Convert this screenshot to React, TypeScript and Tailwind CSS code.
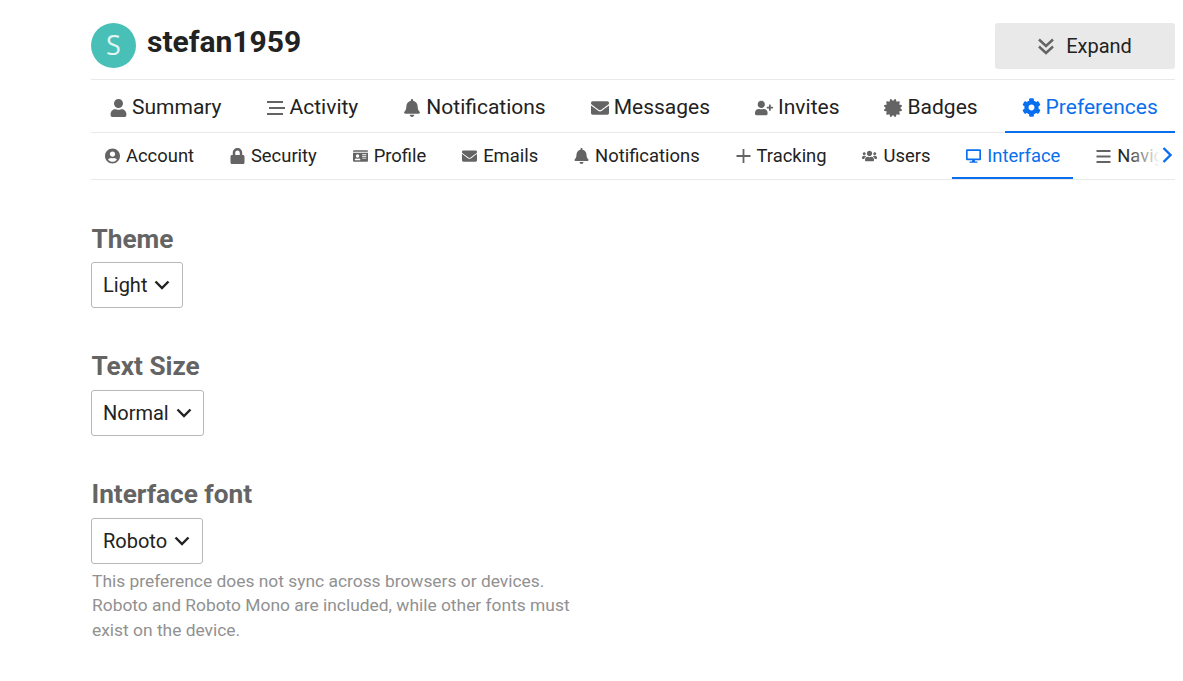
import React from 'react';
import type { IconType } from 'react-icons';
import {
  FaUser, FaBell, FaEnvelope, FaUserPlus, FaCertificate, FaCog,
  FaUserCircle, FaLock, FaIdCard, FaUsers, FaDesktop,
} from 'react-icons/fa';

type IconProps = { className?: string };

const StreamIcon = ({ className }: IconProps) => (
  <svg viewBox="0 0 18 14" fill="none" stroke="currentColor" strokeWidth="2" className={className}>
    <path d="M0 1h16M2 7h16M0 13h16" />
  </svg>
);

const BarsIcon = ({ className }: IconProps) => (
  <svg viewBox="0 0 14 13" fill="none" stroke="currentColor" strokeWidth="2" className={className}>
    <path d="M0 1h14M0 6.5h14M0 12h14" />
  </svg>
);

const PlusIcon = ({ className }: IconProps) => (
  <svg viewBox="0 0 14 14" fill="none" stroke="currentColor" strokeWidth="1.8" className={className}>
    <path d="M7 0v14M0 7h14" />
  </svg>
);

const mainNav: { label: string; icon: IconType | React.FC<IconProps>; size: string; active?: boolean }[] = [
  { label: 'Summary', icon: FaUser, size: 'h-[18px] w-[17px]' },
  { label: 'Activity', icon: StreamIcon, size: 'h-[14px] w-[18px]' },
  { label: 'Notifications', icon: FaBell, size: 'h-[18px] w-[18px]' },
  { label: 'Messages', icon: FaEnvelope, size: 'h-[18px] w-[18px]' },
  { label: 'Invites', icon: FaUserPlus, size: 'h-[18px] w-[18px]' },
  { label: 'Badges', icon: FaCertificate, size: 'h-[18px] w-[18px]' },
  { label: 'Preferences', icon: FaCog, size: 'h-[19px] w-[19px]', active: true },
];

const subNav: { label: string; icon: IconType | React.FC<IconProps>; size: string; active?: boolean }[] = [
  { label: 'Account', icon: FaUserCircle, size: 'h-[16px] w-[15px]' },
  { label: 'Security', icon: FaLock, size: 'h-[16px] w-[15px]' },
  { label: 'Profile', icon: FaIdCard, size: 'h-[16px] w-[15px]' },
  { label: 'Emails', icon: FaEnvelope, size: 'h-[16px] w-[15px]' },
  { label: 'Notifications', icon: FaBell, size: 'h-[16px] w-[15px]' },
  { label: 'Tracking', icon: PlusIcon, size: 'h-[14px] w-[15px]' },
  { label: 'Users', icon: FaUsers, size: 'h-[16px] w-[15px]' },
  { label: 'Interface', icon: FaDesktop, size: 'h-[16px] w-[15px]', active: true },
  { label: 'Navigation', icon: BarsIcon, size: 'h-[13px] w-[15px]' },
];

const Select: React.FC<{ value: string }> = ({ value }) => (
  <button className="flex h-[46px] items-center gap-[7px] rounded-[3px] border border-[#b8b8b8] bg-white pl-[11px] pr-[11.6px] text-[20px] text-[#222222]">
    {value}
    <svg viewBox="0 0 16 10" fill="none" stroke="currentColor" strokeWidth="2.4" className="h-[10px] w-[16px]">
      <path d="M1.5 1.5 8 8l6.5-6.5" />
    </svg>
  </button>
);

const App: React.FC = () => {
  return (
    <div className="min-h-[681px] overflow-hidden bg-white pl-[91px] pr-[8px] font-['Roboto',sans-serif] text-[#222222]">
      {/* user header */}
      <div className="flex h-[80px] items-start justify-between border-b border-[#e9e9e9] pt-[23px]">
        <div className="flex items-start gap-[11px]">
          <div className="flex h-[45px] w-[45px] items-center justify-center rounded-full bg-[#48c0b8] font-['Open_Sans',sans-serif] text-[27px] text-[#e4f5f3]">
            S
          </div>
          <h1 className="text-[30px] leading-[38px] font-bold">stefan1959</h1>
        </div>
        <button className="flex h-[46px] w-[180px] items-center justify-center gap-[12px] rounded-[3px] bg-[#e9e9e9] text-[20px]">
          <svg viewBox="0 0 16 17" fill="none" stroke="#646464" strokeWidth="2.4" className="h-[17px] w-[16px]">
            <path d="M1 1.5 8 8l7-6.5M1 8.5l7 6.5 7-6.5" />
          </svg>
          Expand
        </button>
      </div>

      {/* main tabs */}
      <nav className="flex h-[53px] items-stretch gap-[10px] border-b border-[#e9e9e9] pl-[2px]">
        {mainNav.map(({ label, icon: Icon, size, active }) => (
          <a
            key={label}
            className={`-mb-px flex items-center gap-[5px] border-b-2 pt-[4px] pr-[18px] pl-[17px] text-[21px] last:-ml-px last:pr-[17px] ${
              active ? 'border-[#0a6fef] text-[#0a6fef]' : 'border-transparent'
            }`}
          >
            <Icon className={`${size} ${active ? 'text-[#0a6fef]' : 'text-[#646464]'}`} />
            {label}
          </a>
        ))}
      </nav>

      {/* sub tabs, scrolls sideways */}
      <div className="relative border-b border-[#e9e9e9]">
        <nav className="flex h-[46px] items-stretch gap-[8.9px] overflow-hidden">
          {subNav.map(({ label, icon: Icon, size, active }) => (
            <a
              key={label}
              className={`flex shrink-0 items-center gap-[6px] border-b-2 pt-[2px] pr-[13px] pl-[14px] text-[18.4px] ${
                active ? 'border-[#0a6fef] text-[#0a6fef]' : 'border-transparent'
              }`}
            >
              <Icon className={`${size} ${active ? 'text-[#0a6fef]' : 'text-[#646464]'}`} />
              {label}
            </a>
          ))}
        </nav>
        <div className="absolute top-0 right-0 flex h-[44px] w-[50px] items-center justify-end bg-gradient-to-r from-transparent to-white to-70%">
          <svg viewBox="0 0 10 16" fill="none" stroke="#0a6fef" strokeWidth="2.4" className="mr-[3px] h-[16px] w-[10px]">
            <path d="M1.5 1 8.5 8l-7 7" />
          </svg>
        </div>
      </div>

      {/* preferences form */}
      <div className="pt-[42px]">
        <div className="mb-[41px]">
          <h2 className="mb-[6px] pl-[0.5px] text-[26.2px] leading-[34px] font-bold text-[#646464]">Theme</h2>
          <div className="flex"><Select value="Light" /></div>
        </div>
        <div className="mb-[41px]">
          <h2 className="mb-[7px] pl-[0.5px] text-[26.2px] leading-[34px] font-bold text-[#646464]">Text Size</h2>
          <div className="flex"><Select value="Normal" /></div>
        </div>
        <div>
          <h2 className="mb-[7px] pl-[0.5px] text-[26.2px] leading-[34px] font-bold text-[#646464]">Interface font</h2>
          <div className="flex"><Select value="Roboto" /></div>
          <p className="mt-[4.7px] w-[500px] pl-px text-[17.4px] leading-[24.5px] text-[#919191]">
            This preference does not sync across browsers or devices.
            <br />
            Roboto and Roboto Mono are included, while other fonts must
            <br />
            exist on the device.
          </p>
        </div>
      </div>
    </div>
  );
};

export default App;
